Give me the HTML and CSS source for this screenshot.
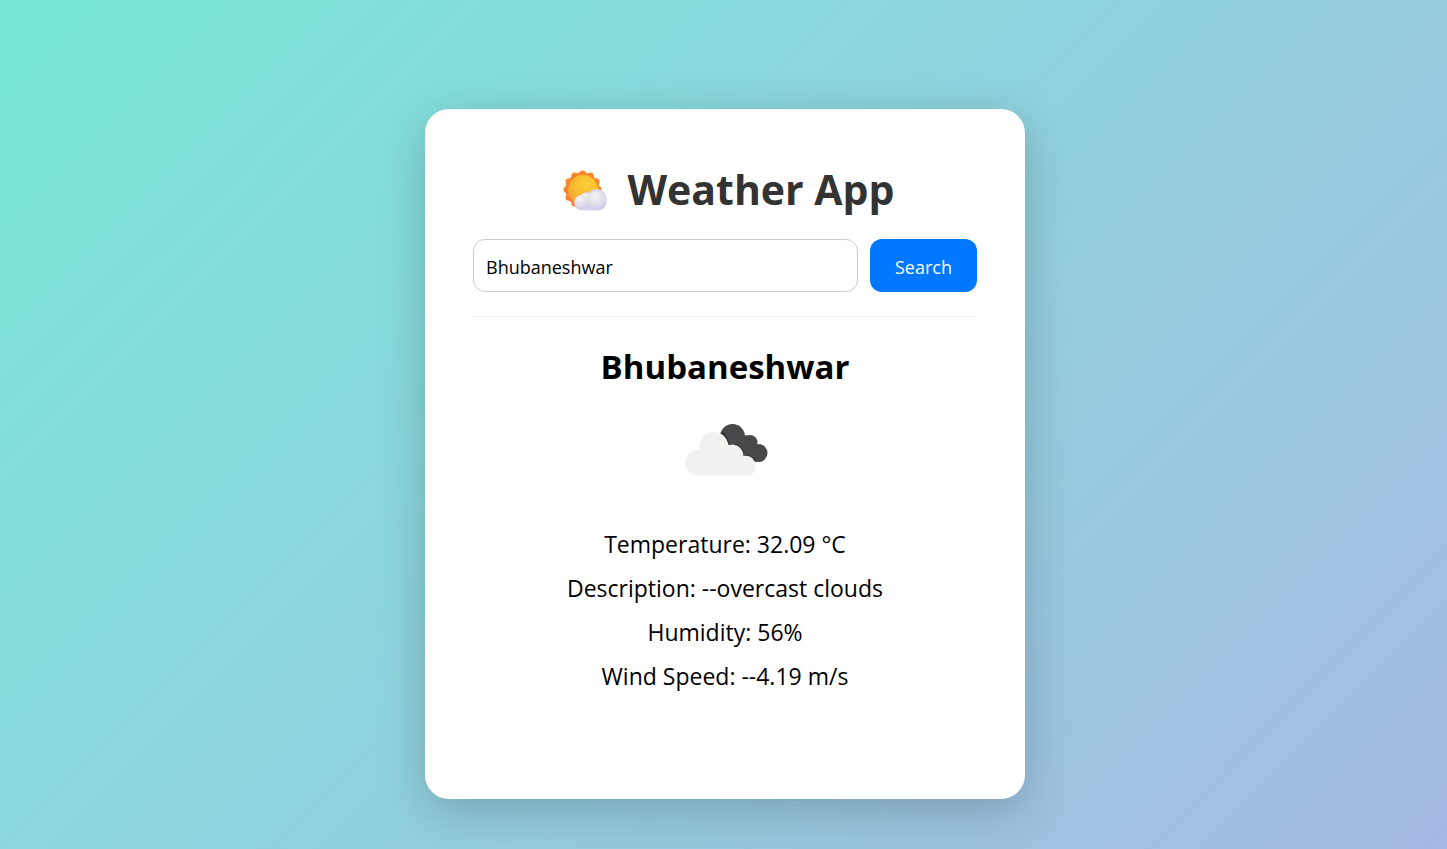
FILE: index.html
```html
<!DOCTYPE html>
<html lang="en">
<head>
<meta charset="utf-8">
<meta name="viewport" content="width=device-width, initial-scale=1">
<title>Weather App</title>
<link rel="stylesheet" href="styles.css">
</head>
<body>
<main class="card">
  <h1 class="title">
    <svg class="title-icon" viewBox="0 0 44 42" aria-hidden="true">
      <defs>
        <radialGradient id="sun" cx="0.62" cy="0.3" r="0.75">
          <stop offset="0" stop-color="#fbd038"/>
          <stop offset="0.5" stop-color="#f6be2e"/>
          <stop offset="1" stop-color="#f2a13a"/>
        </radialGradient>
        <linearGradient id="rays" x1="0" y1="0" x2="0" y2="1">
          <stop offset="0" stop-color="#ff8f28"/>
          <stop offset="1" stop-color="#f87632"/>
        </linearGradient>
        <radialGradient id="puff" cx="0.4" cy="0.25" r="0.8">
          <stop offset="0" stop-color="#f3f2f5"/>
          <stop offset="0.6" stop-color="#e0dee7"/>
          <stop offset="1" stop-color="#d0c5ee"/>
        </radialGradient>
      </defs>
      <g fill="url(#rays)">
        <circle cx="19.500" cy="19.500" r="17"/>
        <circle cx="19.500" cy="4" r="3.500"/><circle cx="27.250" cy="6" r="3.500"/>
        <circle cx="33" cy="11.750" r="3.500"/><circle cx="35" cy="19.500" r="3.500"/>
        <circle cx="33" cy="27.250" r="3.500"/><circle cx="27.250" cy="33" r="3.500"/>
        <circle cx="19.500" cy="35" r="3.500"/><circle cx="11.750" cy="33" r="3.500"/>
        <circle cx="6" cy="27.250" r="3.500"/><circle cx="4" cy="19.500" r="3.500"/>
        <circle cx="6" cy="11.750" r="3.500"/><circle cx="11.750" cy="6" r="3.500"/>
      </g>
      <circle cx="20" cy="20" r="15" fill="url(#sun)"/>
      <path d="M18 40.500a7 7 0 0 1-6.500-8.500c.3-4.500 3-7 7-7 1.500-2.500 5-3.500 7.500-2 2-3 5-4 8-4 5.500 0 9.500 4.500 9.500 9.500V32a8.500 8.500 0 0 1-8.500 8.500z" fill="#dcd6ef"/>
      <circle cx="23" cy="30" r="7" fill="url(#puff)"/>
      <circle cx="18.500" cy="32.500" r="7" fill="url(#puff)"/>
      <path d="M25 34a9.500 9.500 0 1 1 18 0c-1 3.500-4 5.500-7 5.500h-8c-2 0-3-2-3-5.500z" fill="url(#puff)"/>
    </svg>
    <span>Weather App</span>
  </h1>

  <form class="search" onsubmit="return false">
    <input class="search-input" type="text" value="Bhubaneshwar" aria-label="City name">
    <button class="search-button" type="submit">Search</button>
  </form>

  <section class="result">
    <h2 class="city">Bhubaneshwar</h2>
    <svg class="condition" viewBox="0 0 120 120" role="img" aria-label="overcast clouds">
      <g fill="#48484a">
        <circle cx="67.500" cy="45.500" r="12.500"/>
        <circle cx="85" cy="51.500" r="7.500"/>
        <circle cx="93.500" cy="62" r="9"/>
        <path d="M62 50L82 44 96 62 92 71 78 69z"/>
      </g>
      <g fill="none" stroke="#303032" stroke-width="2">
        <path d="M57 41.500Q61 44 63.500 54Q76 52 78.500 65Q86 65 90 70"/>
      </g>
      <path d="M32 84.500A12.800 12.800 0 1 1 34.500 59C33 48 41 41 49 41c7 0 13 5 14.500 13 8-2.500 15 4 15 11C86 64 90.500 69 90.500 75c0 5-3 9.500-8 9.500z" fill="#f1f1f0"/>
    </svg>
    <div class="details">
      <p>Temperature: 32.09 °C</p>
      <p>Description: --overcast clouds</p>
      <p>Humidity: 56%</p>
      <p>Wind Speed: --4.19 m/s</p>
    </div>
  </section>
</main>
</body>
</html>
```
FILE: styles.css
```css
* {
  box-sizing: border-box;
  margin: 0;
  padding: 0;
}

body {
  display: flex;
  justify-content: center;
  align-items: flex-start;
  min-height: 100vh;
  padding: 109px 0 48px 3px;
  background: linear-gradient(135deg, #78e8d7, #a6bae3);
  font-family: "Segoe UI", "Open Sans", "Noto Sans", sans-serif;
  color: #000;
}

.card {
  width: 100%;
  max-width: 600px;
  padding: 48px 48px 107px;
  border-radius: 24px;
  background: #fff;
  box-shadow: 0 12px 48px rgba(0, 0, 0, 0.2);
  text-align: center;
}

.title {
  display: flex;
  justify-content: center;
  align-items: center;
  gap: 20px;
  padding-left: 8px;
  margin-bottom: 18px;
  font-size: 41px;
  line-height: 64px;
  color: #333;
}

.title-icon {
  width: 44px;
  height: 42px;
  margin-top: 4px;
}

.search {
  display: flex;
  gap: 12px;
  padding-bottom: 24px;
  border-bottom: 1px solid #eee;
}

.search-input {
  flex: 1;
  min-width: 0;
  height: 53px;
  padding: 2px 12px 0;
  border: 1px solid #ccc;
  border-radius: 12px;
  background: #fff;
  color: #000;
  font: inherit;
  font-size: 18px;
}

.search-button {
  padding: 2px 25px 0;
  border: 0;
  border-radius: 12px;
  background: #0077ff;
  color: #fff;
  font: inherit;
  font-size: 18px;
  cursor: pointer;
}

.result {
  padding-top: 26px;
}

.city {
  font-size: 33px;
  line-height: 48px;
}

.condition {
  display: block;
  width: 120px;
  height: 120px;
  margin: 0 auto;
}

.details {
  display: grid;
  gap: 12px;
  padding-top: 17px;
  font-size: 23px;
  line-height: 32px;
}
```
